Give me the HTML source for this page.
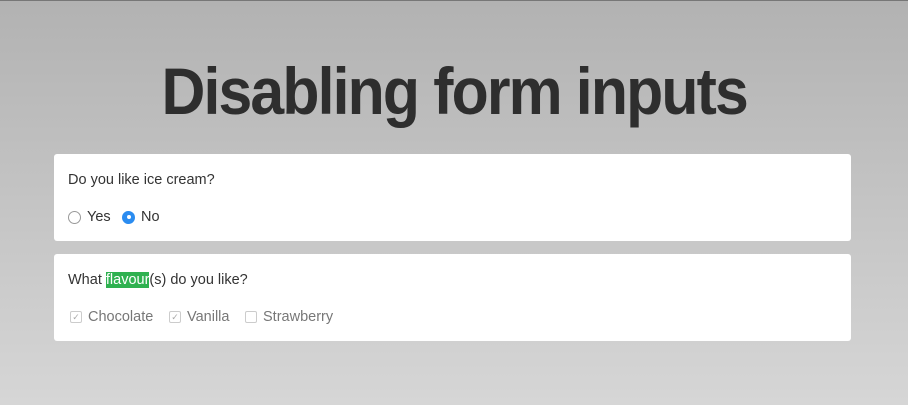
<!DOCTYPE html>
<html><head><style>
html,body{margin:0;height:405px;width:908px;overflow:hidden}
body{background:linear-gradient(#b2b2b2,#d6d6d6);border-top:1px solid #777;box-sizing:border-box;font-family:"Liberation Sans",sans-serif;color:#333;position:relative}
h1{position:absolute;left:0;width:908px;top:52px;margin:0;text-align:center;font-size:66px;font-weight:bold;color:#2e2e2e;letter-spacing:-2px;line-height:76px}
h1 span{display:inline-block;transform:scaleX(0.92)}
.card{position:absolute;left:54px;width:797px;background:#fff;border-radius:3px;font-size:14.5px}
.q{position:absolute;left:14px}
.opt{position:absolute;display:flex;align-items:center;gap:6px}
.radio{width:13px;height:13px;border:1px solid #999;border-radius:50%;box-sizing:border-box}
.radio.on{background:#2b8cf0;border-color:#2b8cf0;display:flex;align-items:center;justify-content:center}
.radio.on:after{content:"";width:4px;height:4px;background:#fff;border-radius:50%}
.cb{width:12px;height:12px;border:1px solid #ccc;border-radius:2px;box-sizing:border-box;font-size:9px;color:#aaa;line-height:10px;text-align:center}
.dis{color:#777}
.hl{background:#2fb150;color:#fff}
</style></head><body>
<h1><span>Disabling form inputs</span></h1>
<div class="card" style="top:153px;height:87px">
<div class="q" style="top:18px">Do you like ice cream?</div>
<div class="opt" style="left:14px;top:55px"><div class="radio"></div>Yes</div>
<div class="opt" style="left:68px;top:55px"><div class="radio on"></div>No</div>
</div>
<div class="card" style="top:253px;height:87px">
<div class="q" style="top:18px">What <span class="hl">flavour</span>(s) do you like?</div>
<div class="opt dis" style="left:16px;top:55px"><div class="cb">✓</div>Chocolate</div>
<div class="opt dis" style="left:115px;top:55px"><div class="cb">✓</div>Vanilla</div>
<div class="opt dis" style="left:191px;top:55px"><div class="cb"></div>Strawberry</div>
</div>
</body></html>
